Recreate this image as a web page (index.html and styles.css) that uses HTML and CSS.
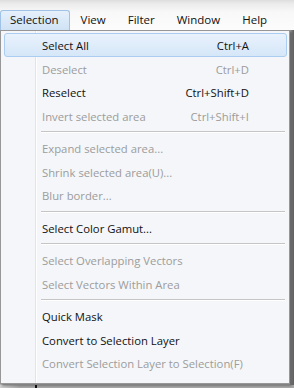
FILE: index.html
```html
<!DOCTYPE html>
<html lang="en">
<head>
  <meta charset="UTF-8">
  <title>Selection menu</title>
  <link rel="stylesheet" href="styles.css">
</head>
<body>

<div class="menubar">
  <span class="title active">Selection</span>
  <span class="title">View</span>
  <span class="title">Filter</span>
  <span class="title">Window</span>
  <span class="title">Help</span>
</div>

<div class="workspace">
  <div class="dropdown">
    <div class="item hover"><span>Select All</span><span class="key">Ctrl+A</span></div>
    <div class="item off"><span>Deselect</span><span class="key">Ctrl+D</span></div>
    <div class="item"><span>Reselect</span><span class="key">Ctrl+Shift+D</span></div>
    <div class="item off"><span>Invert selected area</span><span class="key">Ctrl+Shift+I</span></div>
    <div class="sep"></div>
    <div class="item off"><span>Expand selected area...</span></div>
    <div class="item off"><span>Shrink selected area(U)...</span></div>
    <div class="item off"><span>Blur border...</span></div>
    <div class="sep"></div>
    <div class="item"><span>Select Color Gamut...</span></div>
    <div class="sep"></div>
    <div class="item off"><span>Select Overlapping Vectors</span></div>
    <div class="item off"><span>Select Vectors Within Area</span></div>
    <div class="sep"></div>
    <div class="item"><span>Quick Mask</span></div>
    <div class="item"><span>Convert to Selection Layer</span></div>
    <div class="item off"><span>Convert Selection Layer to Selection(F)</span></div>
  </div>
  <div class="edge"></div>
</div>
<div class="bottom"></div>

</body>
</html>
```

FILE: styles.css
```css
body {
  margin: 0;
  width: 294px;
  height: 388px;
  overflow: hidden;
  font-family: "Open Sans", "Noto Sans", sans-serif;
  font-size: 11.3px;
  color: #111;
  background: #b4b4b4;
}
.menubar {
  height: 30px;
  box-sizing: border-box;
  padding-top: 10px;
  display: flex;
  font-size: 11.5px;
  background: linear-gradient(#dedede 0, #ececec 4px, #f8f8f8 12px, #fcfcfc 30px);
}
.title {
  padding: 0 10px;
  line-height: 18px;
  border: 1px solid transparent;
  border-bottom: none;
}
.title.active {
  padding-left: 9px;
  background: linear-gradient(#e6f0fb, #cfe2f5);
  border-color: #9fc2e6;
  border-radius: 3px 3px 0 0;
}
.workspace {
  display: flex;
  height: 355px;
}
.dropdown {
  width: 290px;
  height: 354px;
  box-sizing: border-box;
  padding: 2px 2px 2px 3px;
  border: 1px solid #979797;
  background: linear-gradient(to right, #f4f6f9 34px, #e2e3e3 34px, #e2e3e3 35px, #ffffff 35px, #ffffff 36px, #f4f6f9 36px);
  box-shadow: 2px 2px 2px rgba(0, 0, 0, 0.3);
  position: relative;
  z-index: 1;
}
.item {
  height: 23.5px;
  line-height: 23px;
  box-sizing: border-box;
  padding: 0 37px 0 37px;
  display: flex;
  justify-content: space-between;
  border: 1px solid transparent;
  white-space: nowrap;
}
.item.hover {
  background: linear-gradient(#e9f2fc, #d5e7f8);
  border-color: #aacdf1;
  border-radius: 3px;
}
.item.off {
  color: #9c9c9c;
}
.key {
  text-align: right;
}
.sep {
  height: 9px;
  margin: 0 2px 0 37px;
  background: linear-gradient(transparent 4px, #c5c5c5 4px, #c5c5c5 5px, #ffffff 5px, #ffffff 6px, transparent 6px);
}
.edge {
  flex: 1;
  background: linear-gradient(to right, #9a9a9a, #5c5c5c);
}
.bottom {
  height: 3px;
  background: linear-gradient(to right, #d0d0d0 0, #a8a8a8 20px, #a8a8a8 35px, #111 35px, #111 37px, #a8a8a8 37px);
}
```
